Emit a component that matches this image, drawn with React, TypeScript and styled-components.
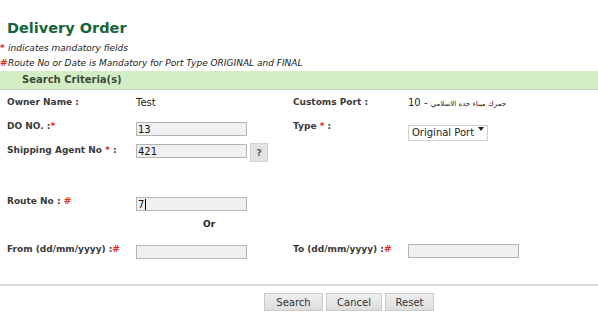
import React from 'react';
import styled, { createGlobalStyle } from 'styled-components';

const Global = createGlobalStyle`
  html, body { margin: 0; padding: 0; background: #fff; }
  body { font-family: "DejaVu Sans", Verdana, sans-serif; color: #333; }
  * { box-sizing: border-box; }
`;

const Page = styled.div`
  width: 598px;
  height: 326px;
  overflow: hidden;
`;

const Header = styled.header`
  padding-top: 19px;
`;

const Title = styled.h1`
  margin: 0 0 0 7px;
  font-size: 14.5px;
  line-height: 18px;
  font-weight: bold;
  color: #15643a;
`;

const Notes = styled.div`
  margin-top: 4px;
  font-size: 9px;
  line-height: 15px;
  font-style: italic;
  color: #222;
`;

const Mark = styled.span`
  color: #e3261f;
  font-style: normal;
  font-weight: bold;
  display: inline-block;
  width: 8px;
`;

const Req = styled.span`
  color: #e3261f;
`;

const Band = styled.div`
  height: 19px;
  background: #d3eec5;
  border-bottom: 1px solid #c9cfc6;
  padding-left: 22px;
  font-size: 10px;
  font-weight: bold;
  line-height: 18px;
  color: #3d4a3c;
`;

const Form = styled.div`
  padding: 6px 0 0 7px;
`;

const Row = styled.div<{ $h: number }>`
  display: grid;
  grid-template-columns: 129px 157px 115px 1fr;
  height: ${(p) => p.$h}px;
  align-items: start;
`;

const Label = styled.div`
  font-size: 9px;
  font-weight: bold;
  line-height: 13px;
  color: #3a3a3a;
  white-space: nowrap;
`;

const Value = styled.div`
  font-size: 10px;
  line-height: 13px;
  color: #222;
  white-space: nowrap;
`;

const Arabic = styled.span`
  font-size: 7px;
`;

const Field = styled.div<{ $mt?: number }>`
  display: flex;
  align-items: flex-start;
  margin-top: ${(p) => p.$mt ?? 0}px;
  position: relative;
`;

const TextBox = styled.input<{ $mt?: number }>`
  width: 111px;
  height: 14px;
  margin: ${(p) => p.$mt ?? 0}px 0 0 0;
  padding: 0 1px;
  border: 1px solid #b4b4b4;
  background: #f0f0f0;
  font-family: "DejaVu Sans", Verdana, sans-serif;
  font-size: 10px;
  line-height: 12px;
  color: #111;
  outline: none;
`;

const Caret = styled.span`
  position: absolute;
  left: 9px;
  top: 2px;
  width: 1px;
  height: 11px;
  background: #000;
`;

const HelpButton = styled.button`
  width: 18px;
  height: 19px;
  margin-left: 3px;
  padding: 0;
  border: 1px solid #d2d2d2;
  background: #e2e2e2;
  font-family: "DejaVu Sans", Verdana, sans-serif;
  font-size: 9px;
  font-weight: bold;
  color: #555;
`;

const SelectWrap = styled.div`
  position: relative;
  width: 80px;
  height: 16px;
`;

const Select = styled.select`
  appearance: none;
  width: 80px;
  height: 16px;
  padding: 0 0 0 3px;
  border: 1px solid #cfcfcf;
  background: #fff;
  font-family: "DejaVu Sans", Verdana, sans-serif;
  font-size: 10px;
  color: #222;
  outline: none;
`;

const Arrow = styled.span`
  position: absolute;
  right: 4px;
  top: 6px;
  width: 0;
  height: 0;
  border-left: 3px solid transparent;
  border-right: 3px solid transparent;
  border-top: 4px solid #222;
  pointer-events: none;
`;

const Or = styled.div`
  padding-left: 67px;
  font-size: 9px;
  font-weight: bold;
  line-height: 13px;
  color: #222;
`;

const Divider = styled.hr`
  margin: 0;
  height: 2px;
  border: none;
  background: #d9d9d9;
`;

const Buttons = styled.div`
  display: flex;
  gap: 3px;
  padding: 7px 0 0 264px;
`;

const Button = styled.button<{ $w: number }>`
  width: ${(p) => p.$w}px;
  height: 18px;
  padding: 0;
  border: 1px solid #c9c9c9;
  background: linear-gradient(#eeeeee, #dddddd);
  font-family: "DejaVu Sans", Verdana, sans-serif;
  font-size: 10px;
  color: #333;
`;

export default function App() {
  return (
    <Page>
      <Global />
      <Header>
        <Title>Delivery Order</Title>
        <Notes>
          <div>
            <Mark>*</Mark>indicates mandatory fields
          </div>
          <div>
            <Mark>#</Mark>Route No or Date is Mandatory for Port Type ORIGINAL and FINAL
          </div>
        </Notes>
      </Header>
      <Band>Search Criteria(s)</Band>
      <Form>
        <Row $h={24}>
          <Label>Owner Name :</Label>
          <Value>Test</Value>
          <Label>Customs Port :</Label>
          <Value>
            10 - <Arabic>جمرك ميناء جده الاسلامي</Arabic>
          </Value>
        </Row>
        <Row $h={24}>
          <Label>
            DO NO. :<Req>*</Req>
          </Label>
          <Field $mt={2}>
            <TextBox defaultValue="13" readOnly />
          </Field>
          <Label>
            Type <Req>*</Req> :
          </Label>
          <Field $mt={1}>
            <SelectWrap>
              <Select defaultValue="original">
                <option value="original">Original Port</option>
                <option value="final">Final Port</option>
              </Select>
              <Arrow />
            </SelectWrap>
          </Field>
        </Row>
        <Row $h={51}>
          <Label>
            Shipping Agent No <Req>*</Req> :
          </Label>
          <Field $mt={-1}>
            <TextBox $mt={1} defaultValue="421" readOnly />
            <HelpButton>?</HelpButton>
          </Field>
          <div />
          <div />
        </Row>
        <Row $h={23}>
          <Label>
            Route No : <Req>#</Req>
          </Label>
          <Field $mt={2}>
            <TextBox defaultValue="7" readOnly />
            <Caret />
          </Field>
          <div />
          <div />
        </Row>
        <Row $h={25}>
          <div />
          <Or>Or</Or>
          <div />
          <div />
        </Row>
        <Row $h={41}>
          <Label>
            From (dd/mm/yyyy) :<Req>#</Req>
          </Label>
          <Field $mt={2}>
            <TextBox readOnly />
          </Field>
          <Label>
            To (dd/mm/yyyy) :<Req>#</Req>
          </Label>
          <Field $mt={1}>
            <TextBox readOnly />
          </Field>
        </Row>
      </Form>
      <Divider />
      <Buttons>
        <Button $w={59}>Search</Button>
        <Button $w={56}>Cancel</Button>
        <Button $w={49}>Reset</Button>
      </Buttons>
    </Page>
  );
}
